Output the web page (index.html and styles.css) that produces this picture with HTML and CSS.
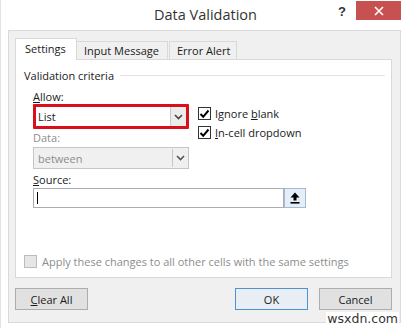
FILE: index.html
```html
<!DOCTYPE html>
<html lang="en">
<head>
    <meta charset="UTF-8">
    <title>Data Validation</title>
    <link rel="stylesheet" href="styles.css">
</head>
<body>
    <div class="dialog">
        <div class="titlebar">
            <div></div>
            <div class="title">Data Validation</div>
            <div class="controls">
                <span class="help">?</span>
                <span class="close">
                    <svg width="10" height="10" viewBox="0 0 10 10"><path d="M1 1 L9 9 M9 1 L1 9" stroke="#fff" stroke-width="1.6"/></svg>
                </span>
            </div>
        </div>

        <div class="panel">
            <div class="tabs">
                <div class="tab active">Settings</div>
                <div class="tab">Input Message</div>
                <div class="tab">Error Alert</div>
            </div>

            <div class="tab-body">
                <div class="legend"><span>Validation criteria</span><div class="rule"></div></div>

                <div class="criteria">
                    <div class="left-col">
                        <div class="label"><u>A</u>llow:</div>
                        <div class="highlight">
                            <div class="combo">
                                <span class="combo-text">List</span>
                                <span class="combo-arrow">
                                    <svg width="9" height="6" viewBox="0 0 9 6"><path d="M1 1 L4.5 4.5 L8 1" fill="none" stroke="#444" stroke-width="1.6"/></svg>
                                </span>
                            </div>
                        </div>
                        <div class="label disabled">Data:</div>
                        <div class="combo combo-disabled">
                            <span class="combo-text">between</span>
                            <span class="combo-arrow">
                                <svg width="9" height="6" viewBox="0 0 9 6"><path d="M1 1 L4.5 4.5 L8 1" fill="none" stroke="#555" stroke-width="1.6"/></svg>
                            </span>
                        </div>
                    </div>
                    <div class="right-col">
                        <div class="check-row">
                            <span class="box">
                                <svg width="11" height="10" viewBox="0 0 11 10"><path d="M1.5 5 L4.2 7.8 L9.5 1.5" fill="none" stroke="#000" stroke-width="2"/></svg>
                            </span>
                            <span>Ignore <u>b</u>lank</span>
                        </div>
                        <div class="check-row">
                            <span class="box">
                                <svg width="11" height="10" viewBox="0 0 11 10"><path d="M1.5 5 L4.2 7.8 L9.5 1.5" fill="none" stroke="#000" stroke-width="2"/></svg>
                            </span>
                            <span><u>I</u>n-cell dropdown</span>
                        </div>
                    </div>
                </div>

                <div class="source">
                    <div class="label source-label"><u>S</u>ource:</div>
                    <div class="source-row">
                        <div class="source-input"><span class="caret"></span></div>
                        <div class="ref-btn">
                            <svg width="10" height="12" viewBox="0 0 10 12"><path d="M5 0.5 L9.5 5.5 H6.5 V8.5 H3.5 V5.5 H0.5 Z" fill="#000"/><rect x="0.5" y="10" width="9" height="1.6" fill="#000"/></svg>
                        </div>
                    </div>
                </div>

                <div class="apply">
                    <span class="box box-disabled"></span>
                    <span>Apply these changes to all other cells with the same settings</span>
                </div>
            </div>

            <div class="buttons">
                <button class="btn"><u>C</u>lear All</button>
                <div class="btn-group">
                    <button class="btn btn-default">OK</button>
                    <button class="btn">Cancel</button>
                </div>
            </div>
        </div>

        <div class="watermark">wsxdn.com</div>
    </div>
</body>
</html>
```

FILE: styles.css
```css
body {
    margin: 0;
    background: #fff;
    font-family: "Open Sans", "Noto Sans", sans-serif;
    font-size: 11px;
    color: #1a1a1a;
}
.dialog {
    position: relative;
    width: 410px;
    height: 328px;
    box-sizing: border-box;
    padding: 0 9px 0 7px;
    border-left: 1px solid #e4e4e4;
    background: #fff;
}
.titlebar {
    display: grid;
    grid-template-columns: 1fr auto 1fr;
    height: 30px;
    margin-left: -7px;
    margin-right: -9px;
}
.title {
    font-size: 14.5px;
    color: #333;
    line-height: 30px;
}
.controls {
    display: flex;
    justify-content: flex-end;
    align-items: flex-start;
    padding-top: 1px;
    padding-right: 9px;
}
.help {
    font-family: "Liberation Sans", sans-serif;
    font-weight: bold;
    font-size: 13px;
    color: #333;
    margin-right: 10px;
    margin-top: 3px;
}
.close {
    display: flex;
    align-items: center;
    justify-content: center;
    width: 45px;
    height: 19px;
    background: #c75050;
}
.panel {
    height: 293px;
    box-sizing: border-box;
    background: #f0f0f0;
    border: 1px solid #dadada;
    padding: 7px 8px 0 6px;
}
.tabs {
    display: flex;
    align-items: flex-end;
    height: 21px;
    position: relative;
    z-index: 1;
}
.tab {
    height: 18px;
    line-height: 17px;
    padding: 0 0 0 7px;
    border: 1px solid #d9d9d9;
    border-bottom: none;
    background: #f0f0f0;
    margin-right: -1px;
    box-sizing: border-box;
    white-space: nowrap;
}
.tab.active {
    width: 62px;
    height: 22px;
    line-height: 20px;
    background: #fff;
    margin-bottom: -1px;
    padding-left: 9px;
}
.tab:nth-child(2) {
    width: 92px;
}
.tab:nth-child(3) {
    margin-left: 2px;
    width: 68px;
}
.tab-body {
    display: flex;
    flex-direction: column;
    height: 219px;
    box-sizing: border-box;
    background: #fff;
    border: 1px solid #d9d9d9;
    padding: 8px 0 8px 8px;
}
.legend {
    display: flex;
    align-items: center;
    line-height: 15px;
}
.rule {
    flex: 1;
    height: 1px;
    background: #e3e3e3;
    margin: 0 6px 0 6px;
}
.label {
    line-height: 15px;
}
.disabled {
    color: #8d8d8d;
}
.criteria {
    display: flex;
    padding-left: 9px;
    margin-top: 6px;
}
.left-col {
    width: 156px;
}
.highlight {
    height: 25px;
    box-sizing: border-box;
    border: 3px solid #d9101c;
    border-radius: 1px;
}
.highlight .combo {
    height: 19px;
    border: none;
}
.combo {
    display: flex;
    height: 22px;
    box-sizing: border-box;
    border: 1px solid #abadb3;
    background: #fff;
}
.combo-text {
    flex: 1;
    padding-left: 2px;
    display: flex;
    align-items: center;
}
.combo-arrow {
    width: 15px;
    display: flex;
    align-items: center;
    justify-content: center;
    border-left: 1px solid #c8c8c8;
    background: #ececec;
}
.combo-disabled {
    margin-top: 2px;
    background: #f0f0f0;
    border-color: #c5c5c5;
    color: #8d8d8d;
}
.combo-disabled .combo-text {
    padding-left: 4px;
}
.combo-disabled .combo-arrow {
    background: #f0f0f0;
    border-left-color: #c5c5c5;
    margin: 1px;
    width: 14px;
}
.label.disabled {
    margin-top: 1px;
}
.right-col {
    padding-top: 15px;
    margin-left: 9px;
}
.check-row {
    display: flex;
    align-items: center;
    gap: 4px;
    height: 19px;
    line-height: 15px;
}
.box {
    display: flex;
    align-items: center;
    justify-content: center;
    width: 13px;
    height: 13px;
    box-sizing: border-box;
    border: 1px solid #333;
    background: #fff;
}
.box-disabled {
    border-color: #bcbcbc;
    background: #e6e6e6;
}
.source {
    padding-left: 9px;
}
.source-label {
    margin-top: 3px;
}
.source-row {
    display: flex;
    margin-top: 1px;
}
.source-input {
    width: 251px;
    height: 20px;
    box-sizing: border-box;
    border: 1px solid #abadb3;
    display: flex;
    align-items: center;
    padding-left: 3px;
}
.caret {
    width: 1px;
    height: 12px;
    background: #000;
}
.ref-btn {
    width: 22px;
    height: 20px;
    box-sizing: border-box;
    border: 1px solid #a6b9ce;
    background: #e3eef9;
    display: flex;
    align-items: center;
    justify-content: center;
}
.apply {
    margin-top: auto;
    display: flex;
    align-items: center;
    gap: 5px;
    line-height: 15px;
    color: #8d8d8d;
}
.buttons {
    display: flex;
    justify-content: space-between;
    margin-top: 10px;
}
.btn-group {
    display: flex;
    gap: 11px;
}
.btn {
    width: 73px;
    height: 22px;
    font-family: inherit;
    font-size: 11px;
    color: #1a1a1a;
    background: #e1e1e1;
    border: 1px solid #adadad;
    padding: 0;
}
.btn-default {
    background: #e8eef4;
    border-color: #4e92d1;
}
.watermark {
    position: absolute;
    right: 11px;
    bottom: 2px;
    padding: 0 1px;
    background: #fff;
    font-family: "DejaVu Sans", sans-serif;
    font-size: 12.5px;
    color: #333;
    line-height: 14px;
}
```
